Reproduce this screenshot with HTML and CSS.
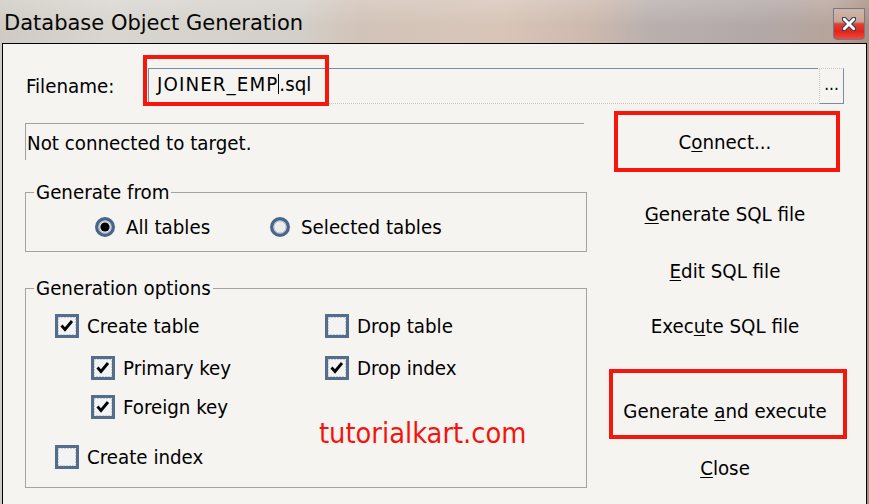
FILE: index.html
```html
<!DOCTYPE html>
<html lang="en">
<head>
<meta charset="utf-8">
<title>Database Object Generation</title>
<link rel="stylesheet" href="styles.css">
</head>
<body>
<div class="window">
  <div class="titlebar">
    <span class="title">Database Object Generation</span>
    <button class="close" aria-label="Close">
      <svg width="14" height="14" viewBox="0 0 14 14"><path d="M2 2 L12 12 M12 2 L2 12" stroke="#3a3f5c" stroke-width="5" stroke-linecap="round"/><path d="M2.3 2.3 L11.7 11.7 M11.7 2.3 L2.3 11.7" stroke="#fff" stroke-width="2.8" stroke-linecap="round"/></svg>
    </button>
  </div>
  <div class="body">
    <div class="file-row">
      <label class="file-label">Filename:</label>
      <div class="file-input"><span class="fname">JOINER_EMP</span><span class="caret"></span>.sql</div>
      <button class="browse">...</button>
      <span class="mark mark-file"></span>
    </div>
    <div class="main">
      <div class="left">
        <div class="status">Not connected to target.</div>
        <fieldset class="group group-from">
          <legend>Generate from</legend>
          <div class="radios">
            <label class="radio radio-first"><svg width="20" height="20" viewBox="0 0 20 20"><circle cx="10" cy="10" r="8.3" fill="#ececec" stroke="#48658a" stroke-width="3.4"/><circle cx="10" cy="10" r="6.2" fill="none" stroke="#a3b0c0" stroke-width="1"/><circle cx="10" cy="10" r="4.6" fill="#000"/></svg>All tables</label>
            <label class="radio"><svg width="20" height="20" viewBox="0 0 20 20"><circle cx="10" cy="10" r="8.3" fill="#ececec" stroke="#48658a" stroke-width="3.4"/><circle cx="10" cy="10" r="6.2" fill="none" stroke="#a3b0c0" stroke-width="1"/></svg>Selected tables</label>
          </div>
        </fieldset>
        <fieldset class="group group-opts">
          <legend>Generation options</legend>
          <div class="opts">
            <div class="opt-row">
              <label class="cell c1"><svg class="box" width="24" height="24" viewBox="0 0 24 24"><rect x="1.5" y="1.5" width="21" height="21" fill="#f3f3f3" stroke="#546d8d" stroke-width="3"/><rect x="3.5" y="3.5" width="17" height="17" fill="none" stroke="#9eabbb" stroke-width="1" stroke-dasharray="1 2"/><path d="M6.5 11.5 L10 15.5 L17 7" fill="none" stroke="#000" stroke-width="2.8"/></svg>Create table</label>
              <label class="cell"><svg class="box" width="24" height="24" viewBox="0 0 24 24"><rect x="1.5" y="1.5" width="21" height="21" fill="#f3f3f3" stroke="#546d8d" stroke-width="3"/><rect x="3.5" y="3.5" width="17" height="17" fill="none" stroke="#9eabbb" stroke-width="1" stroke-dasharray="1 2"/></svg>Drop table</label>
            </div>
            <div class="opt-row row-b">
              <label class="cell c1 indent"><svg class="box" width="24" height="24" viewBox="0 0 24 24"><rect x="1.5" y="1.5" width="21" height="21" fill="#f3f3f3" stroke="#546d8d" stroke-width="3"/><rect x="3.5" y="3.5" width="17" height="17" fill="none" stroke="#9eabbb" stroke-width="1" stroke-dasharray="1 2"/><path d="M6.5 11.5 L10 15.5 L17 7" fill="none" stroke="#000" stroke-width="2.8"/></svg>Primary key</label>
              <label class="cell"><svg class="box" width="24" height="24" viewBox="0 0 24 24"><rect x="1.5" y="1.5" width="21" height="21" fill="#f3f3f3" stroke="#546d8d" stroke-width="3"/><rect x="3.5" y="3.5" width="17" height="17" fill="none" stroke="#9eabbb" stroke-width="1" stroke-dasharray="1 2"/><path d="M6.5 11.5 L10 15.5 L17 7" fill="none" stroke="#000" stroke-width="2.8"/></svg>Drop index</label>
            </div>
            <div class="opt-row row-c">
              <label class="cell c1 indent"><svg class="box" width="24" height="24" viewBox="0 0 24 24"><rect x="1.5" y="1.5" width="21" height="21" fill="#f3f3f3" stroke="#546d8d" stroke-width="3"/><rect x="3.5" y="3.5" width="17" height="17" fill="none" stroke="#9eabbb" stroke-width="1" stroke-dasharray="1 2"/><path d="M6.5 11.5 L10 15.5 L17 7" fill="none" stroke="#000" stroke-width="2.8"/></svg>Foreign key</label>
            </div>
            <div class="opt-row row-d">
              <label class="cell c1"><svg class="box" width="24" height="24" viewBox="0 0 24 24"><rect x="1.5" y="1.5" width="21" height="21" fill="#f3f3f3" stroke="#546d8d" stroke-width="3"/><rect x="3.5" y="3.5" width="17" height="17" fill="none" stroke="#9eabbb" stroke-width="1" stroke-dasharray="1 2"/></svg>Create index</label>
            </div>
            <span class="watermark">tutorialkart.com</span>
          </div>
        </fieldset>
      </div>
      <div class="actions">
        <button class="act act-connect">C<u>o</u>nnect...</button>
        <button class="act act-gen"><u>G</u>enerate SQL file</button>
        <button class="act act-edit"><u>E</u>dit SQL file</button>
        <button class="act act-exec">Exec<u>u</u>te SQL file</button>
        <button class="act act-genexec">Generate <u>a</u>nd execute</button>
        <button class="act act-close"><u>C</u>lose</button>
      </div>
    </div>
  </div>
</div>
</body>
</html>
```

FILE: styles.css
```css
* { box-sizing: border-box; }
html, body { margin: 0; padding: 0; }
body {
  width: 869px;
  height: 504px;
  overflow: hidden;
  font-family: "DejaVu Sans Condensed", "Liberation Sans", sans-serif;
  font-size: 20.3px;
  color: #000;
}
.window {
  width: 869px;
  height: 504px;
  display: flex;
  flex-direction: column;
  padding: 0 2px;
  background:
    linear-gradient(180deg, rgba(255,255,255,0.18) 0px, rgba(255,255,255,0) 26px),
    linear-gradient(90deg, #cfcbc4 0px, #d9d6d0 110px, #d3cfc9 300px, #d2c3b8 360px, #d8c5b8 500px, #cdb9ad 590px, #b9b0ae 650px, #b2a8a8 760px, #b7a49b 830px, #a98e80 869px);
}
.titlebar {
  flex: none;
  height: 43px;
  display: flex;
  align-items: flex-start;
}
.title {
  font-family: "DejaVu Sans", sans-serif;
  font-size: 21px;
  line-height: 24px;
  padding: 11px 0 0 2px;
  color: #050505;
}
.close {
  width: 32px;
  height: 32px;
  margin: 8px 2px 0 auto;
  padding: 0;
  border: 1px solid #6b7b93;
  border-radius: 0 0 4px 4px;
  background: linear-gradient(180deg, #cfb6a9 0%, #c7a596 42%, #dc4236 50%, #e2241a 75%, #f04a3e 100%);
  display: flex;
  align-items: center;
  justify-content: center;
}
.body {
  flex: 1;
  background: #f5f4f1;
  border: 1px solid #000;
  border-bottom: 0;
}
.file-row {
  position: relative;
  display: flex;
  align-items: center;
  height: 36px;
  margin-top: 24px;
  padding-left: 23px;
}
.file-label {
  flex: none;
  width: 122px;
  line-height: 24px;
}
.file-input {
  flex: none;
  width: 670px;
  height: 36px;
  border-top: 1px solid #7b8da3;
  border-left: 1px solid #7b8da3;
  border-bottom: 1px dotted #c4c4c4;
  padding: 3px 0 0 8px;
  line-height: 24px;
  white-space: nowrap;
}
.fname { letter-spacing: 1.1px; }
.caret {
  display: inline-block;
  width: 1px;
  height: 20px;
  background: #000;
  vertical-align: -3px;
}
.browse {
  flex: none;
  width: 25px;
  height: 36px;
  margin-left: 1px;
  padding: 0 0 4px 0;
  border-top: 1px dotted #c8c8c8;
  border-left: 1px dotted #c8c8c8;
  border-right: 1px solid #7b8da3;
  border-bottom: 1px solid #7b8da3;
  background: #f5f4f1;
  font: inherit;
  font-size: 17px;
  line-height: 24px;
  color: #000;
}
.mark {
  position: absolute;
  border: 4px solid #f5170c;
  pointer-events: none;
}
.mark-file {
  left: 140px;
  top: -13px;
  width: 186px;
  height: 51px;
}
.main {
  display: grid;
  grid-template-columns: 562px 246px;
  column-gap: 15px;
  padding-left: 22px;
}
.left {
  display: flex;
  flex-direction: column;
}
.status {
  margin: 19px 3px 0 0;
  border-top: 1px solid #a0a0a0;
  border-left: 1px solid #a0a0a0;
  padding: 7px 0 5px 1px;
  line-height: 24px;
}
.group {
  margin: 0;
  padding: 0;
  min-width: 0;
  border: 1px solid #a3a3a3;
}
.group legend {
  margin-left: 8px;
  padding: 0 2px;
  line-height: 24px;
}
.group-from { margin-top: 20px; }
.group-opts { margin-top: 24px; }
.radios {
  display: flex;
  align-items: center;
  height: 24px;
  margin: 11px 0 12px 69px;
}
.radio {
  display: flex;
  align-items: center;
  gap: 11px;
}
.radio svg { flex: none; }
.radio-first { width: 175px; }
.opts {
  position: relative;
  padding: 14px 0 18px 29px;
}
.opt-row {
  display: flex;
  align-items: center;
  height: 24px;
}
.row-b { margin-top: 18px; }
.row-c { margin-top: 15px; }
.row-d { margin-top: 26px; }
.cell {
  display: flex;
  align-items: center;
  gap: 8px;
  line-height: 24px;
}
.cell .box { flex: none; }
.c1 { width: 270px; }
.indent { padding-left: 36px; }
.watermark {
  position: absolute;
  left: 293px;
  top: 116px;
  font-size: 28.7px;
  line-height: 34px;
  color: #f2140f;
  white-space: nowrap;
}
.actions {
  display: flex;
  flex-direction: column;
}
.act {
  position: relative;
  width: 100%;
  height: 24px;
  padding: 0;
  border: 0;
  background: none;
  font: inherit;
  line-height: 24px;
  text-align: center;
  color: #000;
  white-space: nowrap;
}
.act u {
  text-decoration-thickness: 1px;
  text-underline-offset: 2px;
}
.act-connect { margin-top: 26px; }
.act-gen { margin-top: 48px; }
.act-edit { margin-top: 33px; }
.act-exec { margin-top: 31px; }
.act-genexec { margin-top: 61px; }
.act-close { margin-top: 33px; }
.act-connect::after,
.act-genexec::after {
  content: "";
  position: absolute;
  border: 4px solid #f5170c;
  pointer-events: none;
}
.act-connect::after { left: 12px; right: 8px; top: -19px; bottom: -18px; }
.act-genexec::after { left: 7px; right: 1px; top: -30px; bottom: -16px; }
```
